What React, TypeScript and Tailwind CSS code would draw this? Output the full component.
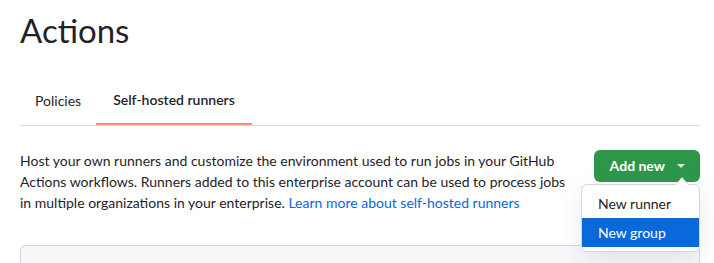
const font = { fontFamily: 'Lato, "Liberation Sans", sans-serif' };

const Caret = () => (
  <svg width="8" height="4" viewBox="0 0 8 4" className="fill-current">
    <path d="M0 0h8L4 4z" />
  </svg>
);

const AddNewMenu = () => (
  <div className="relative shrink-0">
    <button className="flex h-8 items-center gap-[12px] rounded-md bg-[#2c974b] pl-[16px] pr-[15px] text-sm font-bold text-white">
      <span>Add new</span>
      <span className="text-white/80">
        <Caret />
      </span>
    </button>
    <div className="absolute right-0 top-[34px] z-10 w-[119px] rounded-md border border-[#d0d7de] bg-white py-1 shadow-[0_8px_24px_rgba(140,149,159,0.2)]">
      <div className="absolute -top-[8px] right-[10px] h-0 w-0 border-x-[7px] border-b-[8px] border-x-transparent border-b-[#d0d7de]" />
      <div className="absolute -top-[7px] right-[11px] h-0 w-0 border-x-[6px] border-b-[7px] border-x-transparent border-b-white" />
      <div className="flex h-[29px] items-center px-4 text-sm text-[#1f2328]">New runner</div>
      <div className="flex h-[29px] items-center bg-[#0969da] px-4 text-sm text-white">New group</div>
    </div>
  </div>
);

export default function App() {
  return (
    <div className="h-[263px] overflow-hidden bg-white pl-5 pr-[14px] text-[#1f2328]" style={font}>
      <h1 className="pt-[10px] text-[33px] leading-[40px] font-normal">Actions</h1>
      <div className="mt-[27px] flex border-b border-[#d8dee4]">
        <div className="flex h-12 items-center px-[15px] text-sm text-[#1f2328]">Policies</div>
        <div className="-mb-px flex h-12 items-center border-b-2 border-[#fd8c73] px-[17px] text-sm font-semibold">
          Self-hosted runners
        </div>
      </div>
      <div className="mt-6 flex items-start justify-between gap-4">
        <p className="whitespace-nowrap text-sm leading-[21px]">
          Host your own runners and customize the environment used to run jobs in your GitHub
          <br />
          Actions workflows. Runners added to this enterprise account can be used to process jobs
          <br />
          in multiple organizations in your enterprise.{" "}
          <a href="#" className="text-[#0969da]">
            Learn more about self-hosted runners
          </a>
        </p>
        <AddNewMenu />
      </div>
      <div className="mt-8 h-12 rounded-md border border-[#d0d7de] bg-[#f6f8fa]" />
    </div>
  );
}
